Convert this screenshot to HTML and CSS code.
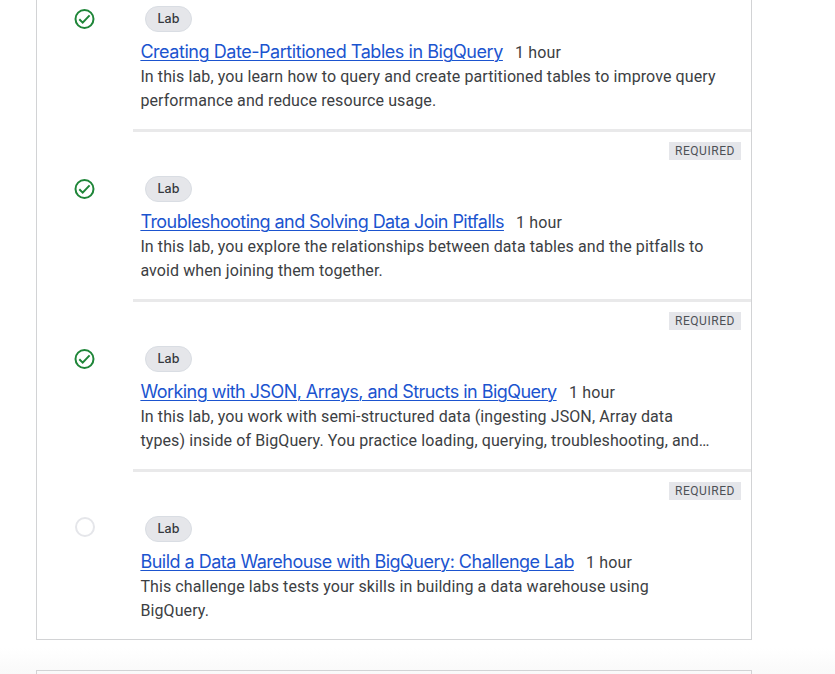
FILE: index.html
```
<!DOCTYPE html>
<html lang="en">
<head>
<meta charset="utf-8">
<title>Course labs</title>
<link rel="stylesheet" href="styles.css">
</head>
<body>
<main class="page">
  <section class="module">
    <article class="activity activity-first">
      <div class="status"><svg class="check" viewBox="0 0 20 20"><circle cx="10" cy="10" r="9"/><path d="M4.8 10.2l3.4 3.4 6.9-7.2"/></svg></div>
      <div class="content">
        <span class="chip">Lab</span>
        <div class="heading"><a class="title title-dates" href="#">Creating Date-Partitioned Tables in BigQuery</a><span class="duration">1 hour</span></div>
        <p class="description">In this lab, you learn how to query and create partitioned tables to improve query<br>performance and reduce resource usage.</p>
      </div>
    </article>
    <article class="activity">
      <div class="status"><svg class="check" viewBox="0 0 20 20"><circle cx="10" cy="10" r="9"/><path d="M4.8 10.2l3.4 3.4 6.9-7.2"/></svg></div>
      <div class="content">
        <span class="required">REQUIRED</span>
        <span class="chip">Lab</span>
        <div class="heading"><a class="title title-joins" href="#">Troubleshooting and Solving Data Join Pitfalls</a><span class="duration">1 hour</span></div>
        <p class="description">In this lab, you explore the relationships between data tables and the pitfalls to<br>avoid when joining them together.</p>
      </div>
    </article>
    <article class="activity">
      <div class="status"><svg class="check" viewBox="0 0 20 20"><circle cx="10" cy="10" r="9"/><path d="M4.8 10.2l3.4 3.4 6.9-7.2"/></svg></div>
      <div class="content">
        <span class="required">REQUIRED</span>
        <span class="chip">Lab</span>
        <div class="heading"><a class="title title-json" href="#">Working with JSON, Arrays, and Structs in BigQuery</a><span class="duration">1 hour</span></div>
        <p class="description">In this lab, you work with semi-structured data (ingesting JSON, Array data<br>types) inside of BigQuery. You practice loading, querying, troubleshooting, and…</p>
      </div>
    </article>
    <article class="activity">
      <div class="status"><span class="pending"></span></div>
      <div class="content">
        <span class="required">REQUIRED</span>
        <span class="chip">Lab</span>
        <div class="heading"><a class="title title-build" href="#">Build a Data Warehouse with BigQuery: Challenge Lab</a><span class="duration">1 hour</span></div>
        <p class="description">This challenge labs tests your skills in building a data warehouse using<br>BigQuery.</p>
      </div>
    </article>
  </section>
  <section class="module module-next"></section>
</main>
</body>
</html>
```
FILE: styles.css
```
* { box-sizing: border-box; }
body {
  margin: 0;
  background: #fff;
  color: #3c4043;
  font-family: Roboto, sans-serif;
}
.page {
  height: 674px;
  overflow: hidden;
  padding-left: 36px;
  background: linear-gradient(#fff 648px, #f9f9f9 674px);
}
.module {
  width: 716px;
  height: 640px;
  border: 1px solid #d2d3d5;
  border-top: 0;
  background: #fff;
}
.module-next {
  height: 40px;
  margin-top: 30px;
  border-top: 1px solid #d2d3d5;
  background: transparent;
}
.activity {
  display: grid;
  grid-template-columns: 96px 1fr;
  height: 170px;
}
.activity-first { height: 132px; }
.status { padding: 47px 0 0 37px; }
.activity-first .status { padding-top: 9px; }
.check {
  display: block;
  width: 21px;
  height: 20px;
  fill: none;
  stroke: #1e8538;
  stroke-width: 2;
  overflow: visible;
}
.pending {
  display: block;
  width: 20px;
  height: 20px;
  margin: -2px 0 0 1px;
  border: 2px solid #e5e6ea;
  border-radius: 50%;
}
.content {
  display: flex;
  flex-direction: column;
  align-items: flex-start;
  padding: 10px 10px 0 7.4px;
  border-bottom: 3px solid #e9e9ea;
}
.activity-first .content { padding-top: 6px; }
.activity:last-child .content { border-bottom: 0; }
.required {
  align-self: flex-end;
  width: 72px;
  height: 18px;
  margin-bottom: 16px;
  background: #e5e6ea;
  color: #4d5156;
  font: 400 12px/18px Roboto, sans-serif;
  letter-spacing: .55px;
  text-align: center;
}
.chip {
  width: 47px;
  height: 26px;
  margin-left: 4.6px;
  border: 1px solid #d9dde3;
  border-radius: 13px;
  background: #e5e6ea;
  color: #35383c;
  font: 500 12.5px/24px Inter, sans-serif;
  text-align: center;
}
.heading {
  display: flex;
  align-items: baseline;
  height: 26px;
  margin-top: 7px;
  line-height: 26px;
  white-space: nowrap;
}
.title {
  color: #1b54cf;
  font-family: Inter, sans-serif;
  font-size: 18px;
  text-decoration: underline;
  text-decoration-thickness: 1px;
  text-decoration-skip-ink: auto;
  text-underline-offset: 2px;
}
.title-dates { width: 362.5px; letter-spacing: -.45px; }
.title-joins { width: 363.5px; letter-spacing: -.56px; }
.title-json { width: 416.5px; letter-spacing: -.54px; }
.title-build { width: 433.5px; letter-spacing: -.51px; }
.duration { margin-left: 12px; font-size: 16px; letter-spacing: .2px; }
.description {
  margin: 0;
  font-size: 16px;
  line-height: 24px;
  letter-spacing: .1px;
  white-space: nowrap;
}
```
